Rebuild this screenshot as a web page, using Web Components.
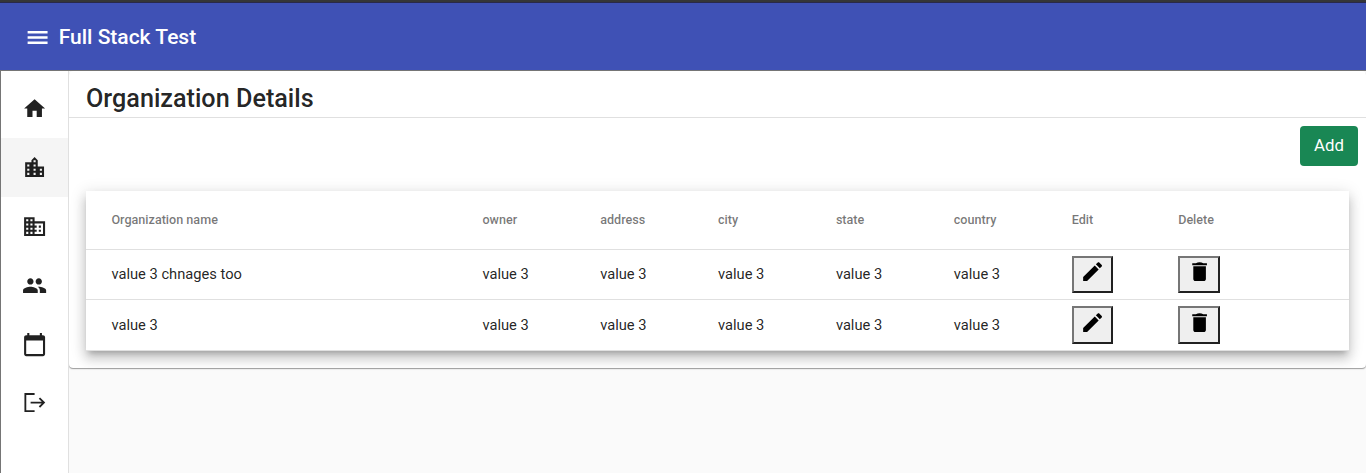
<!DOCTYPE html>
<html lang="en"><head><meta charset="utf-8"><title>Full Stack Test</title>
<style>
html,body{margin:0;height:100%;overflow:hidden;background:#fafafa}
body{font-family:Roboto,"Liberation Sans",sans-serif;color:rgba(0,0,0,.87)}
</style></head><body>
<app-shell>
  <app-toolbar slot="bar">Full Stack Test</app-toolbar>
  <side-nav slot="nav"></side-nav>
  <org-card><span slot="title">Organization Details</span><org-table></org-table></org-card>
</app-shell>
<script>
const icons={
home:'<path d="M10 20v-6h4v6h5v-8h3L12 3 2 12h3v8z"/>',
city:'<path d="M15 11V5l-3-3-3 3v2H3v14h18V11h-6zm-8 8H5v-2h2v2zm0-4H5v-2h2v2zm0-4H5V9h2v2zm6 8h-2v-2h2v2zm0-4h-2v-2h2v2zm0-4h-2V9h2v2zm0-4h-2V5h2v2zm6 12h-2v-2h2v2zm0-4h-2v-2h2v2z"/>',
domain:'<path d="M12 7V3H2v18h20V7H12zM6 19H4v-2h2v2zm0-4H4v-2h2v2zm0-4H4V9h2v2zm0-4H4V5h2v2zm4 12H8v-2h2v2zm0-4H8v-2h2v2zm0-4H8V9h2v2zm0-4H8V5h2v2zm10 12h-8v-2h2v-2h-2v-2h2v-2h-2V9h8v10zm-2-8h-2v2h2v-2zm0 4h-2v2h2v-2z"/>',
people:'<path d="M16 11c1.66 0 2.99-1.34 2.99-3S17.66 5 16 5s-3 1.34-3 3 1.34 3 3 3zm-8 0c1.66 0 2.99-1.34 2.99-3S9.66 5 8 5 5 6.34 5 8s1.34 3 3 3zm0 2c-2.33 0-7 1.17-7 3.5V19h14v-2.5c0-2.33-4.67-3.5-7-3.5zm8 0c-.29 0-.62.02-.97.05 1.16.84 1.97 1.97 1.97 3.45V19h6v-2.5c0-2.33-4.67-3.5-7-3.5z"/>',
calendar:'<path d="M20 3h-1V1h-2v2H7V1H5v2H4c-1.1 0-2 .9-2 2v16c0 1.1.9 2 2 2h16c1.1 0 2-.9 2-2V5c0-1.1-.9-2-2-2zm0 18H4V8h16v13z"/>',
logout:'<path d="M12 3.8H3.2v16.4H12M8.2 12h12.6M16.6 7.8l4.3 4.2-4.3 4.2" fill="none" stroke="currentColor" stroke-width="1.75"/>',
menu:'<path d="M2.500 5.700h19v2.500h-19zM2.500 10.700h19v2.500h-19zM2.500 15.700h19v2.500h-19z"/>',
edit:'<path d="M3 17.25V21h3.75L17.81 9.94l-3.75-3.75L3 17.25zM20.71 7.04c.39-.39.39-1.02 0-1.41l-2.34-2.34c-.39-.39-1.02-.39-1.41 0l-1.83 1.83 3.75 3.75 1.83-1.83z"/>',
delete:'<path d="M6 19c0 1.1.9 2 2 2h8c1.1 0 2-.9 2-2V7H6v12zM19 4h-3.5c-1-.7-2.2-1-3.5-1s-2.500.3-3.500 1H5v2h14V4z"/>'};
const define=(name,html)=>customElements.define(name,class extends HTMLElement{
  constructor(){super();this.attachShadow({mode:'open'}).innerHTML=typeof html==='function'?html(this):html}
});
define('app-icon',el=>`<style>:host{display:block;width:25.2px;height:25.2px;flex:none}svg{display:block;width:100%;height:100%;fill:currentColor}</style><svg viewBox="0 0 24 24">${icons[el.getAttribute('name')]}</svg>`);
define('app-shell',`<style>
:host{display:flex;flex-direction:column;height:100vh}
.edge{height:2px;background:#353638;border-bottom:1px solid #29294a;flex:none}
.body{flex:1;min-height:0;display:flex;border-left:1px solid #757575;border-top:1px solid #757575}
main{flex:1;min-width:0;overflow:hidden;background:#fafafa}
</style><div class="edge"></div><slot name="bar"></slot><div class="body"><slot name="nav"></slot><main><slot></slot></main></div>`);
define('app-toolbar',`<style>
:host{display:flex;align-items:center;box-sizing:border-box;height:67px;flex:none;padding:1px 0 0 25px;background:#3f51b5;color:#fff;font-size:21px;font-weight:500;line-height:32px}
span{margin-left:8.5px}
app-icon{margin-top:1.5px}
</style><app-icon name="menu"></app-icon><span><slot></slot></span>`);
define('side-nav',`<style>
:host{display:block;box-sizing:border-box;width:68px;flex:none;padding-top:8.4px;background:#fff;border-right:1px solid #e0e0e0;color:rgba(0,0,0,.87)}
a{display:flex;height:58.8px;align-items:center;justify-content:center}
.on{background:#f5f5f5}
.cal{padding-top:1px;box-sizing:border-box}
</style><a><app-icon name="home"></app-icon></a><a class="on"><app-icon name="city"></app-icon></a><a><app-icon name="domain"></app-icon></a><a><app-icon name="people"></app-icon></a><a class="cal"><app-icon name="calendar"></app-icon></a><a><app-icon name="logout"></app-icon></a>`);
define('add-button',`<style>
:host{display:block}
button{display:block;width:58px;height:40px;padding:0 0 2px;border:0;border-radius:4px;background:#198754;color:#fff;font:400 16.8px/38px Roboto,sans-serif}
</style><button><slot></slot></button>`);
define('org-card',`<style>
:host{display:flex;flex-direction:column;box-sizing:border-box;height:297px;background:#fff;border-radius:4px;box-shadow:0 1px 1px -1px rgba(0,0,0,.4),0 1px 1px rgba(0,0,0,.28),0 1px 2px rgba(0,0,0,.1)}
h2{margin:0;height:46px;box-sizing:content-box;padding-left:17px;border-bottom:1px solid #e0e0e0;font-size:25.2px;font-weight:500;line-height:55px}
.actions{display:flex;justify-content:flex-end;padding:8px 8px 25px}
</style><h2><slot name="title"></slot></h2><div class="actions"><add-button>Add</add-button></div><slot></slot>`);
define('icon-button',el=>`<style>
:host{display:block}
button{display:flex;justify-content:center;align-items:flex-start;box-sizing:border-box;width:41px;height:var(--button-height,37px);padding:var(--button-inset,1px) 0 0;border:2px solid;border-color:#767676 #212121 #212121 #767676;background:#efefef;color:#000}
:host([name=delete]) button{width:42px}
</style><button aria-label="${el.getAttribute('name')}"><app-icon name="${el.getAttribute('name')}"></app-icon></button>`);
const row=n=>`<div class="row"><span>${n}</span>${'<span>value 3</span>'.repeat(5)}<icon-button name="edit"></icon-button><icon-button name="delete"></icon-button></div>`;
define('org-table',`<style>
:host{display:block;margin:0 17px 0 17px;background:#fff;box-shadow:0 5.25px 5.25px -3.15px rgba(0,0,0,.2),0 8.4px 10.5px 1px rgba(0,0,0,.14),0 3.15px 14.7px 2.1px rgba(0,0,0,.12)}
.row{display:grid;grid-template-columns:371px 117.8px 117.8px 117.9px 117.9px 117.9px 106.5px 1fr;align-items:center;box-sizing:border-box;height:50px;padding-left:25.4px;border-bottom:1px solid #e0e0e0;font-size:14.7px}
.row span{padding-bottom:2px}
.row:last-child{height:51px;--button-height:38px;--button-inset:2px}
.row:last-child span{padding-bottom:0}
.row.head{height:59px;padding-bottom:2px;font-size:12.6px;font-weight:500;color:rgba(0,0,0,.54)}
.row.head span{padding:0}
</style><div class="row head">${['Organization name','owner','address','city','state','country','Edit','Delete'].map(t=>`<span>${t}</span>`).join('')}</div>${row('value 3 chnages too')}${row('value 3')}`);
</script></body></html>
